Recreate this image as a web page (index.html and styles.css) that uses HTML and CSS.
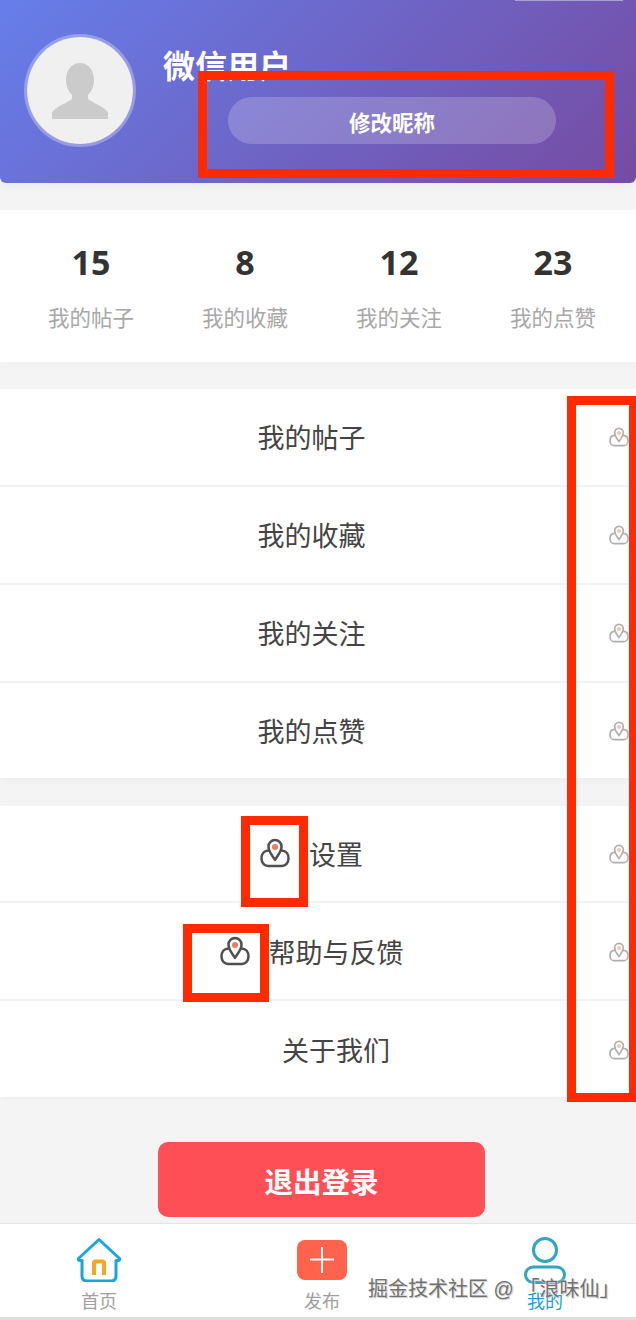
FILE: index.html
```html
<!DOCTYPE html>
<html lang="zh">
<head>
<meta charset="utf-8">
<title>我的</title>
<link rel="stylesheet" href="styles.css">
</head>
<body>
<svg class="defs" width="0" height="0" aria-hidden="true">
  <symbol id="loc" viewBox="0 0 30 30">
    <path class="tray" d="M9.500 12.500H8.500C4.500 12.500 1.500 15.500 1.500 20.500C1.500 25 4.500 28 8 28H22C25.500 28 28.500 25 28.500 20.500C28.500 15.500 25.500 12.500 21.500 12.500H20.500"/>
    <path class="pin" d="M15 22C12.700 18 8.500 14 8.500 8.500a6.500 6.500 0 0 1 13 0C21.500 14 17.200 18 15 22z"/>
    <circle class="dot" cx="15" cy="9" r="3"/>
  </symbol>
</svg>
<div class="page">
  <header class="hero">
    <span class="hero-tick"></span>
    <div class="avatar">
      <svg class="avatar-img" viewBox="0 0 56 56"><path d="M28 0c8 0 14 7 14 17c0 7-3 12-6 15v4c3 3 18 8 20 14v6H0v-6c2-6 17-11 20-14v-4c-3-3-6-8-6-15C14 7 20 0 28 0z"/></svg>
    </div>
    <div class="hero-info">
      <div class="name">微信用户</div>
      <button class="edit-btn">修改昵称</button>
    </div>
  </header>

  <section class="stats">
    <div class="stat"><div class="stat-num">15</div><div class="stat-label">我的帖子</div></div>
    <div class="stat"><div class="stat-num">8</div><div class="stat-label">我的收藏</div></div>
    <div class="stat"><div class="stat-num">12</div><div class="stat-label">我的关注</div></div>
    <div class="stat"><div class="stat-num">23</div><div class="stat-label">我的点赞</div></div>
  </section>

  <section class="menu menu-a">
    <div class="row"><div class="label"><span></span><span>我的帖子</span></div><svg class="arrow"><use href="#loc"/></svg></div>
    <div class="row"><div class="label"><span></span><span>我的收藏</span></div><svg class="arrow"><use href="#loc"/></svg></div>
    <div class="row"><div class="label"><span></span><span>我的关注</span></div><svg class="arrow"><use href="#loc"/></svg></div>
    <div class="row"><div class="label"><span></span><span>我的点赞</span></div><svg class="arrow"><use href="#loc"/></svg></div>
  </section>

  <section class="menu menu-b">
    <div class="row"><div class="label"><span class="lead"><svg class="lead-icon"><use href="#loc"/></svg></span><span>设置</span></div><svg class="arrow"><use href="#loc"/></svg></div>
    <div class="row"><div class="label"><span class="lead"><svg class="lead-icon"><use href="#loc"/></svg></span><span>帮助与反馈</span></div><svg class="arrow"><use href="#loc"/></svg></div>
    <div class="row"><div class="label"><span></span><span>关于我们</span></div><svg class="arrow"><use href="#loc"/></svg></div>
  </section>

  <button class="logout">退出登录</button>

  <nav class="tabs">
    <div class="tab">
      <div class="tab-icon">
        <svg width="44" height="44" viewBox="0 0 44 44">
          <path class="home" d="M22 1.500L42.500 20.500Q43 22.500 41 22.500H39V38Q39 43 34 43H10Q5 43 5 38V22.500H3Q1 22.500 1.500 20.500z"/>
          <path class="home-n" d="M17 37V25Q17 23.500 18.500 23.500H25.500Q27 23.500 27 25V37"/>
        </svg>
      </div>
      <div class="tab-label">首页</div>
    </div>
    <div class="tab">
      <div class="tab-icon">
        <svg width="50" height="40" viewBox="0 0 50 40">
          <rect width="50" height="40" rx="8" fill="#ff634c"/>
          <path d="M13 19.500H37M25 7V33" stroke="#fff" stroke-width="2" fill="none"/>
        </svg>
      </div>
      <div class="tab-label">发布</div>
    </div>
    <div class="tab">
      <div class="tab-icon">
        <svg width="42" height="47" viewBox="0 0 42 47">
          <circle class="me" cx="21" cy="13" r="11.500"/>
          <rect class="me" x="1.500" y="30" width="39" height="15.500" rx="7.700"/>
        </svg>
      </div>
      <div class="tab-label tab-label-on">我的</div>
    </div>
  </nav>
  <div class="floor"></div>

  <div class="mark mark-edit"></div>
  <div class="mark mark-arrows"></div>
  <div class="mark mark-set"></div>
  <div class="mark mark-help"></div>
  <div class="watermark">掘金技术社区 @ 「浪味仙」</div>
</div>
</body>
</html>
```

FILE: styles.css
```css
* { box-sizing: border-box; }
html, body { margin: 0; padding: 0; }
body {
  font-family: "Noto Sans CJK SC", "Noto Sans", sans-serif;
  background: #f4f4f4;
  overflow: hidden;
}
.defs { position: absolute; }
.page {
  position: relative;
  width: 636px;
  height: 1320px;
  overflow: hidden;
  display: flex;
  flex-direction: column;
}

/* hero */
.hero {
  position: relative;
  height: 183px;
  flex: none;
  display: flex;
  align-items: flex-start;
  padding: 34px 0 0 24px;
  background: linear-gradient(135deg, #667eea 0%, #764ba2 100%);
  border-radius: 0 0 6px 6px;
  box-shadow: 0 3px 8px rgba(0, 0, 0, 0.04);
}
.hero-tick {
  position: absolute;
  top: 0;
  left: 515px;
  width: 108px;
  height: 1px;
  background: #a9a0d2;
}
.avatar {
  width: 112px;
  height: 113px;
  flex: none;
  border-radius: 50%;
  background: #f0f0f0;
  background-clip: padding-box;
  border: 3px solid rgba(255, 255, 255, 0.3);
  display: flex;
  justify-content: center;
  padding-top: 26px;
}
.avatar-img { width: 56px; height: 56px; fill: #cbcbcb; }
.hero-info { margin-left: 27px; }
.name {
  font-size: 32px;
  font-weight: 700;
  line-height: 40px;
  color: #fff;
  margin-top: 10px;
}
.edit-btn {
  display: block;
  width: 328px;
  height: 47px;
  margin: 13px 0 0 65px;
  border: 0;
  border-radius: 24px;
  background: rgba(255, 255, 255, 0.2);
  color: #fff;
  font: 700 21.500px/47px "Noto Sans CJK SC", sans-serif;
}

/* stats */
.stats {
  margin-top: 27px;
  height: 152px;
  flex: none;
  display: grid;
  grid-template-columns: repeat(4, 154px);
  padding: 29px 14px 0;
  background: #fff;
  box-shadow: 0 2px 6px rgba(0, 0, 0, 0.02);
}
.stat { text-align: center; }
.stat-num {
  font-family: "Open Sans", sans-serif;
  font-size: 34px;
  font-weight: 700;
  line-height: 46px;
  color: #333;
}
.stat-label {
  margin-top: 17px;
  font-size: 21.500px;
  line-height: 30px;
  color: #a8a8a8;
}

/* menus */
.menu {
  flex: none;
  background: #fff;
  box-shadow: 0 2px 6px rgba(0, 0, 0, 0.03);
}
.menu-a { margin-top: 27px; }
.menu-b { margin-top: 28px; }
.row {
  height: 98px;
  display: flex;
  align-items: center;
  border-bottom: 2px solid #f2f2f2;
}
.menu-a .row:last-child { height: 95px; border-bottom: 0; padding-top: 1px; }
.menu-b .row { padding-top: 2px; }
.menu-b .row:first-child { height: 97px; padding-top: 1px; }
.menu-b .row:last-child { height: 96px; border-bottom: 0; }
.label {
  flex: 1;
  display: grid;
  grid-template-columns: 1fr auto 1fr;
  align-items: center;
  font-size: 27px;
  line-height: 38px;
  color: #444;
}
.menu-a .label { padding-left: 14px; }
.menu-b .label { padding-left: 63px; }
.lead { display: flex; justify-content: flex-end; padding-right: 19px; }
.lead-icon { width: 30px; height: 30px; display: block; margin-top: -2px; }
.arrow {
  width: 20px;
  height: 20px;
  flex: none;
  margin: 0 7px 0 0;
  opacity: 0.45;
}
.tray, .pin {
  fill: #fff;
  stroke: #4f4f4f;
  stroke-width: 2.500;
  stroke-linecap: round;
  stroke-linejoin: round;
}
.dot { fill: #f07a5e; }

/* logout */
.logout {
  flex: none;
  width: 327px;
  height: 75px;
  margin: 45px 0 0 158px;
  border: 0;
  border-radius: 10px;
  background: #ff4f56;
  color: #fff;
  font: 700 28.500px/75px "Noto Sans CJK SC", sans-serif;
}

/* tabs */
.tabs {
  margin-top: 6px;
  flex: none;
  height: 94px;
  display: flex;
  justify-content: space-between;
  padding: 12px 41px 0 49px;
  background: #fff;
  border-top: 1px solid #e4e4e4;
}
.tab { width: 100px; text-align: center; }
.tab-icon {
  height: 48px;
  display: flex;
  align-items: center;
  justify-content: center;
}
.tab-icon svg { display: block; }
.tab-label {
  margin-top: 3px;
  font-size: 18px;
  line-height: 26px;
  color: #a0a0a0;
}
.tab-label-on { color: #1c9fd8; }
.home { fill: none; stroke: #18a6e0; stroke-width: 3; stroke-linejoin: round; }
.home-n { fill: none; stroke: #f5a623; stroke-width: 4; }
.me { fill: none; stroke: #2fa7c0; stroke-width: 3; }
.floor { flex: 1; background: #dedede; }

/* annotations laid over the screenshot */
.mark { position: absolute; border: 9px solid #ff2a00; }
.mark-edit { left: 198px; top: 71px; width: 416px; height: 107px; }
.mark-arrows { left: 567px; top: 396px; width: 69px; height: 706px; border-width: 9px 7px 9px 9px; }
.mark-set { left: 241px; top: 816px; width: 67px; height: 91px; }
.mark-help { left: 183px; top: 924px; width: 86px; height: 78px; }
.watermark {
  position: absolute;
  left: 368px;
  top: 1275px;
  font-family: "Liberation Sans", "Noto Sans CJK SC", sans-serif;
  font-size: 20px;
  line-height: 28px;
  white-space: nowrap;
  color: #707070;
  text-shadow: 0 0 2px #fff, 1px 1px 1px #bbb;
}
```
